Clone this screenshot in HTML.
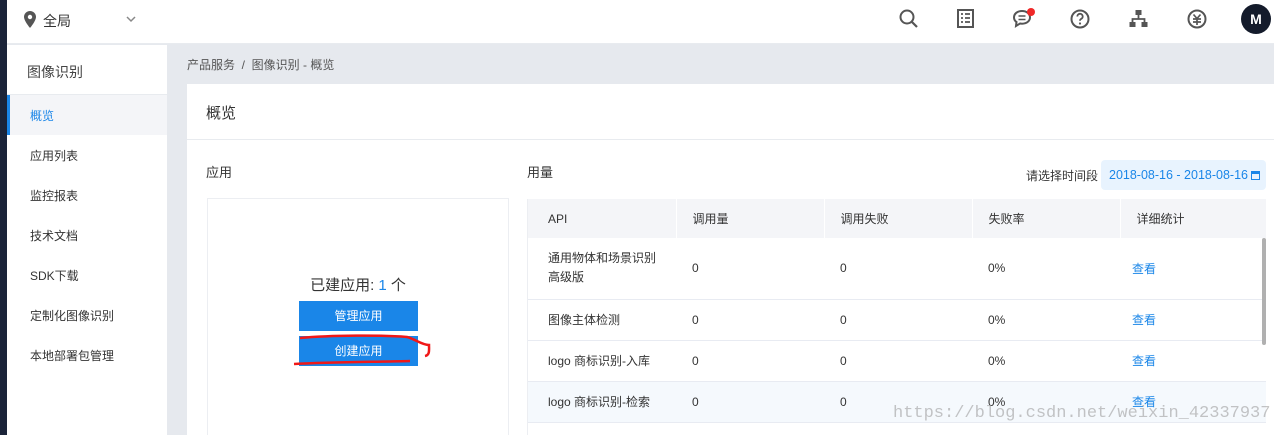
<!DOCTYPE html>
<html style="overflow:hidden"><head><meta charset="utf-8"><style>
*{margin:0;padding:0;box-sizing:border-box}
html,body{overflow:hidden}
body{width:1274px;height:435px;overflow:hidden;background:#e6e9ee;font-family:"Liberation Sans","Noto Sans CJK SC",sans-serif;color:#333;position:relative;font-size:12px}
.a{position:absolute}
.strip{left:0;top:0;width:7px;height:435px;background:#1b2439}
.top{left:7px;top:0;width:1267px;height:44px;background:#fff;border-bottom:1px solid #e8ebef}
.side{left:7px;top:45px;width:160px;height:390px;background:#fff}
.nav{position:absolute;left:23px;font-size:12px;color:#333}
.card{left:187px;top:84px;width:1087px;height:351px;background:#fff;overflow:hidden}
th,td{font-weight:normal;text-align:left}
</style></head><body>
<div class="a strip"></div>
<div class="a top">
 <svg class="a" style="left:17px;top:11px" width="12" height="17" viewBox="0 0 12 17"><path d="M6 0C2.7 0 0 2.6 0 5.9 0 10 6 17 6 17s6-7 6-11.1C12 2.6 9.3 0 6 0z" fill="#555"/><circle cx="6" cy="6" r="2.2" fill="#fff"/></svg>
 <div class="a" style="left:36px;top:11px;font-size:14px;color:#333">全局</div>
 <svg class="a" style="left:119px;top:16px" width="10" height="7" viewBox="0 0 10 7"><path d="M1 1l4 4 4-4" stroke="#888" stroke-width="1.5" fill="none"/></svg>
 <svg class="a" style="left:892px;top:9px" width="20" height="20" viewBox="0 0 20 20"><circle cx="8" cy="8" r="6.5" stroke="#555" stroke-width="2" fill="none"/><path d="M13 13l5 5" stroke="#555" stroke-width="2.2"/></svg>
 <svg class="a" style="left:950px;top:9px" width="17" height="19" viewBox="0 0 17 19"><rect x="1" y="1" width="15" height="17" stroke="#555" stroke-width="2" fill="none"/><path d="M4 5h2M8 5h5M4 9h2M8 9h5M4 13h2M8 13h5" stroke="#555" stroke-width="1.8"/></svg>
 <svg class="a" style="left:1005px;top:8px" width="24" height="20" viewBox="0 0 24 20"><path d="M10 3C5 3 2 6 2 9.5c0 2 1 3.5 2.5 4.5L4 18l4-2.5c.6.1 1.3.2 2 .2 5 0 8-3 8-6.3S15 3 10 3z" stroke="#555" stroke-width="2" fill="none"/><path d="M6.5 8h7M6.5 11.5h7" stroke="#555" stroke-width="1.6"/><circle cx="19" cy="4" r="4" fill="#f02828"/></svg>
 <svg class="a" style="left:1063px;top:9px" width="20" height="20" viewBox="0 0 20 20"><circle cx="10" cy="10" r="8.5" stroke="#555" stroke-width="2" fill="none"/><path d="M7.3 7.5a2.7 2.7 0 1 1 3.7 2.5c-.8.4-1 .9-1 1.8" stroke="#555" stroke-width="1.8" fill="none"/><circle cx="10" cy="14.5" r="1.1" fill="#555"/></svg>
 <svg class="a" style="left:1122px;top:9px" width="19" height="19" viewBox="0 0 19 19"><rect x="6.5" y="1" width="6" height="5" fill="#555"/><rect x="0.5" y="13" width="6" height="5" fill="#555"/><rect x="12.5" y="13" width="6" height="5" fill="#555"/><path d="M9.5 6v4M3.5 13v-3h12v3" stroke="#555" stroke-width="1.8" fill="none"/></svg>
 <svg class="a" style="left:1180px;top:9px" width="20" height="20" viewBox="0 0 20 20"><circle cx="10" cy="10" r="8.5" stroke="#555" stroke-width="2" fill="none"/><path d="M6.5 5.5L10 9.5l3.5-4M6 10h8M6 13h8M10 9.5V16" stroke="#555" stroke-width="1.7" fill="none"/></svg>
 <div class="a" style="left:1234px;top:4px;width:30px;height:30px;border-radius:50%;background:#141b2b;color:#fff;font-size:14px;font-weight:bold;text-align:center;line-height:30px">M</div>
</div>
<div class="a side">
 <div style="height:50px;border-bottom:1px solid #e8ebef;padding:17px 0 0 20px;font-size:14px;color:#444">图像识别</div>
 <div style="position:absolute;left:0;top:50px;width:160px;height:40px;background:#f4f5f8;border-left:3px solid #1a86e8"></div>
 <div class="nav" style="top:62px;color:#1a86e8">概览</div>
 <div class="nav" style="top:102px">应用列表</div>
 <div class="nav" style="top:142px">监控报表</div>
 <div class="nav" style="top:182px">技术文档</div>
 <div class="nav" style="top:222px">SDK下载</div>
 <div class="nav" style="top:262px">定制化图像识别</div>
 <div class="nav" style="top:302px">本地部署包管理</div>
</div>
<div class="a" style="left:187px;top:56px;color:#555;font-size:12px">产品服务 &nbsp;/&nbsp; 图像识别 - 概览</div>
<div class="a card">
 <div style="height:56px;border-bottom:1px solid #e8ebef;padding:18px 0 0 19px;font-size:15px;color:#333">概览</div>
 <div class="a" style="left:19px;top:78px;font-size:13px">应用</div>
 <div class="a" style="left:20px;top:114px;width:302px;height:250px;border:1px solid #eceef2"></div>
 <div class="a" style="left:20px;top:190px;width:302px;text-align:center;font-size:15px;color:#333">已建应用: <span style="color:#1a86e8">1</span> 个</div>
 <div class="a" style="left:112px;top:217px;width:119px;height:30px;background:#1a86e8;color:#fff;text-align:center;line-height:30px;font-size:12px">管理应用</div>
 <div class="a" style="left:112px;top:252px;width:119px;height:30px;background:#1a86e8;color:#fff;text-align:center;line-height:30px;font-size:12px">创建应用</div>
 <svg class="a" style="left:105px;top:250px" width="140" height="36" viewBox="0 0 140 36"><path d="M8 4C40 1 90 1 115 3c8 2 15 8 22 8 0 5 1 10-4 11M2 30C40 28 80 28 118 27" stroke="#f01818" stroke-width="2.5" fill="none"/></svg>
 <div class="a" style="left:340px;top:78px;font-size:13px">用量</div>
 <div class="a" style="left:839px;top:83px;font-size:12px">请选择时间段</div>
 <div class="a" style="left:914px;top:76px;width:165px;height:30px;background:#e8f3fe;border-radius:4px;color:#1a86e8;font-size:12.5px;line-height:30px;padding-left:8px;white-space:nowrap">2018-08-16 - 2018-08-16 <span style="display:inline-block;width:9px;height:9px;border:1.5px solid #1a86e8;border-top-width:3px;vertical-align:-1px"></span></div>
 <table class="a" style="left:340px;top:115px;width:739px;border-collapse:collapse;font-size:12px;color:#333">
  <tr style="height:39px;background:#f4f5f8"><th style="width:149px;padding-left:21px;border-right:1px solid #fff">API</th><th style="width:148px;padding-left:16px;border-right:1px solid #fff">调用量</th><th style="width:148px;padding-left:16px;border-right:1px solid #fff">调用失败</th><th style="width:148px;padding-left:16px;border-right:1px solid #fff">失败率</th><th style="padding-left:16px">详细统计</th></tr>
  <tr style="height:61px;border-bottom:1px solid #e8ebf2"><td style="padding-left:21px;line-height:19px">通用物体和场景识别<br>高级版</td><td style="padding-left:16px">0</td><td style="padding-left:16px">0</td><td style="padding-left:16px">0%</td><td style="padding-left:12px;color:#1a86e8">查看</td></tr>
  <tr style="height:41px;border-bottom:1px solid #e8ebf2"><td style="padding-left:21px">图像主体检测</td><td style="padding-left:16px">0</td><td style="padding-left:16px">0</td><td style="padding-left:16px">0%</td><td style="padding-left:12px;color:#1a86e8">查看</td></tr>
  <tr style="height:41px;border-bottom:1px solid #e8ebf2"><td style="padding-left:21px">logo 商标识别-入库</td><td style="padding-left:16px">0</td><td style="padding-left:16px">0</td><td style="padding-left:16px">0%</td><td style="padding-left:12px;color:#1a86e8">查看</td></tr>
  <tr style="height:41px;border-bottom:1px solid #e8ebf2;background:#f5f9fd"><td style="padding-left:21px">logo 商标识别-检索</td><td style="padding-left:16px">0</td><td style="padding-left:16px">0</td><td style="padding-left:16px">0%</td><td style="padding-left:12px;color:#1a86e8">查看</td></tr>
 </table>
 <div class="a" style="left:340px;top:115px;width:1px;height:240px;background:#eceef2"></div>
 <div class="a" style="left:1075px;top:154px;width:4px;height:107px;background:#b0b0b0;border-radius:2px"></div>
 <div class="a" style="left:706px;top:320px;font-family:'Liberation Mono',monospace;font-size:17px;color:rgba(150,150,150,.55);white-space:nowrap">https://blog.csdn.net/weixin_42337937</div>
</div>
</body></html>
